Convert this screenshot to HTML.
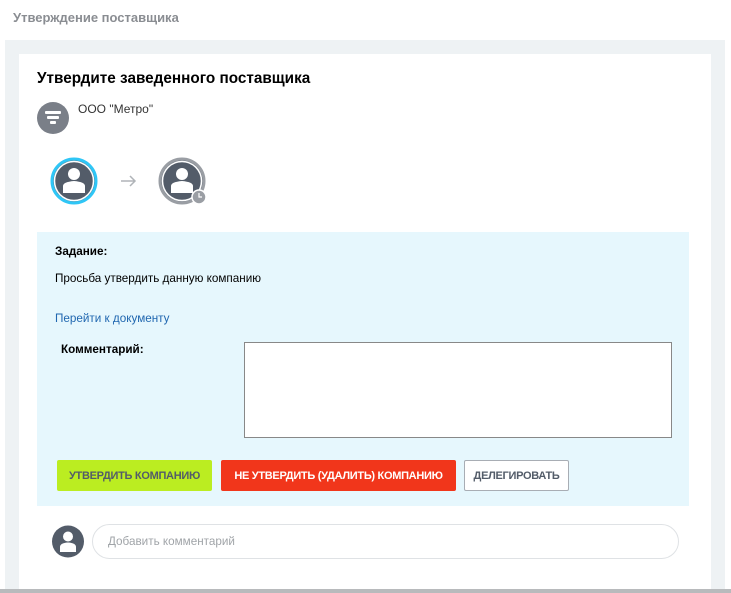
<!DOCTYPE html>
<html><head><meta charset="utf-8"><style>
*{box-sizing:border-box;margin:0;padding:0}
body{width:731px;height:593px;background:#fff;font-family:"Liberation Sans",sans-serif;position:relative;overflow:hidden;font-size:11.7px;color:#000}
.a{position:absolute}
.btn{position:absolute;top:460px;height:31px;font-weight:bold;font-size:11px;display:flex;align-items:center;justify-content:center;border-radius:2px;letter-spacing:-0.3px}
</style></head><body>
<div class="a" style="left:13px;top:10px;font-size:13px;font-weight:bold;color:#8a8d92">Утверждение поставщика</div>
<div class="a" style="left:5px;top:40px;width:720px;height:553px;background:#eef2f4"></div>
<div class="a" style="left:19px;top:54px;width:692px;height:539px;background:#fff"></div>
<div class="a" style="left:0;top:589px;width:731px;height:4px;background:#b8babc"></div>
<div class="a" style="left:37px;top:70px;font-size:15.3px;font-weight:bold">Утвердите заведенного поставщика</div>
<div class="a" style="left:37px;top:102px;width:32px;height:32px;border-radius:50%;background:#7a7f88"></div>
<div class="a" style="left:45px;top:111px;width:16px;height:3px;background:#fff;border-radius:1px"></div>
<div class="a" style="left:47px;top:116px;width:12px;height:3px;background:#fff;border-radius:1px"></div>
<div class="a" style="left:50px;top:121px;width:6px;height:3px;background:#fff;border-radius:1px"></div>
<div class="a" style="left:78px;top:102px;font-size:12px;color:#333">ООО "Метро"</div>
<svg class="a" style="left:50px;top:157px" width="160" height="48">
<circle cx="24" cy="24" r="22" fill="#535c69" stroke="#2fc6f6" stroke-width="3"/>
<circle cx="24" cy="24" r="19.5" fill="none" stroke="#fff" stroke-width="1.5"/>
<circle cx="24" cy="17" r="6" fill="#fff"/><path d="M13 36 L13 29 Q13 25 24 24 Q35 25 35 29 L35 36Z" fill="#fff"/>
<path d="M71 24h14M80 19l5 5-5 5" stroke="#b0b4b8" stroke-width="1.5" fill="none"/>
<circle cx="132" cy="24" r="22" fill="#535c69" stroke="#9a9ea4" stroke-width="3"/>
<circle cx="132" cy="24" r="19.5" fill="none" stroke="#fff" stroke-width="1.5"/>
<circle cx="132" cy="17" r="6" fill="#fff"/><path d="M121 36 L121 29 Q121 25 132 24 Q143 25 143 29 L143 36Z" fill="#fff"/>
<circle cx="149" cy="40" r="7" fill="#9a9ea4" stroke="#fff" stroke-width="1.5"/>
<path d="M149 36v4h3" stroke="#fff" stroke-width="1.2" fill="none"/>
</svg>
<div class="a" style="left:37px;top:232px;width:652px;height:274px;background:#e6f7fd"></div>
<div class="a" style="left:55px;top:245px;font-weight:bold">Задание:</div>
<div class="a" style="left:55px;top:272px">Просьба утвердить данную компанию</div>
<div class="a" style="left:55px;top:312px;color:#2067b0">Перейти к документу</div>
<div class="a" style="left:61px;top:343px;font-weight:bold">Комментарий:</div>
<div class="a" style="left:244px;top:342px;width:428px;height:96px;background:#fff;border:1px solid #888"></div>
<div class="btn" style="left:57px;width:155px;background:#bbed21;color:#535c69">УТВЕРДИТЬ КОМПАНИЮ</div>
<div class="btn" style="left:221px;width:235px;background:#f1361b;color:#fff">НЕ УТВЕРДИТЬ (УДАЛИТЬ) КОМПАНИЮ</div>
<div class="btn" style="left:464px;width:105px;background:#fff;color:#535c69;border:1px solid #a8adb4">ДЕЛЕГИРОВАТЬ</div>
<svg class="a" style="left:52px;top:525px" width="32" height="33"><circle cx="16" cy="16.5" r="16" fill="#535c69"/><circle cx="16" cy="11.5" r="5" fill="#fff"/><path d="M8 27 L8 22 Q8 18 16 17.5 Q24 18 24 22 L24 27Z" fill="#fff"/></svg>
<div class="a" style="left:92px;top:524px;width:587px;height:35px;border:1px solid #dfe2e5;border-radius:18px;background:#fff"></div>
<div class="a" style="left:108px;top:535px;color:#a0a4a8">Добавить комментарий</div>
</body></html>
